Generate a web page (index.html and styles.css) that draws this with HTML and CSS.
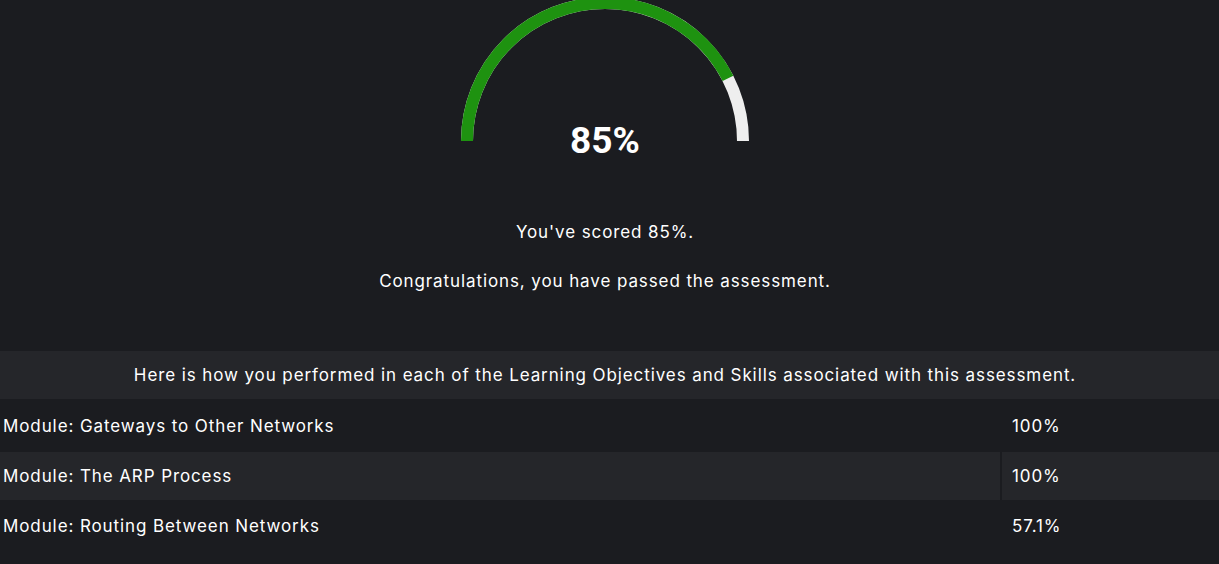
FILE: index.html
```html
<!DOCTYPE html>
<html>
<head>
<meta charset="utf-8">
<link rel="stylesheet" href="styles.css">
</head>
<body>
<div class="page">
  <div class="gauge">
    <svg class="gauge-svg" width="290" height="142" viewBox="0 0 290 142">
      <path d="M 7 141 A 138 138 0 0 1 283 141" fill="none" stroke="#eeeeee" stroke-width="12"/>
      <path d="M 7 141 A 138 138 0 0 1 283 141" fill="none" stroke="#1e9210" stroke-width="12" pathLength="100" stroke-dasharray="85 200"/>
      <text x="145" y="153" text-anchor="middle" class="gauge-label">85%</text>
    </svg>
  </div>
  <p class="msg msg-score">You've scored 85%.</p>
  <p class="msg msg-pass">Congratulations, you have passed the assessment.</p>
  <div class="results">
    <div class="results-head">Here is how you performed in each of the Learning Objectives and Skills associated with this assessment.</div>
    <div class="row row-1">
      <div class="cell cell-name">Module: Gateways to Other Networks</div>
      <div class="cell cell-score">100%</div>
    </div>
    <div class="row row-2 row-alt">
      <div class="cell cell-name">Module: The ARP Process</div>
      <div class="cell cell-score">100%</div>
    </div>
    <div class="row row-3">
      <div class="cell cell-name">Module: Routing Between Networks</div>
      <div class="cell cell-score">57.1%</div>
    </div>
  </div>
</div>
</body>
</html>
```
FILE: styles.css
```css
html, body {
  margin: 0;
  padding: 0;
  background: #1b1c20;
  height: 100%;
  overflow: hidden;
}
body {
  font-family: Inter, "Liberation Sans", sans-serif;
  font-weight: 400;
  color: #ffffff;
  letter-spacing: 0.9px;
}
.page {
  display: flex;
  flex-direction: column;
}
.gauge {
  display: flex;
  justify-content: center;
  height: 142px;
  padding-right: 9px;
}
.gauge-svg {
  display: block;
  overflow: visible;
}
.gauge-label {
  font-family: Roboto, "Liberation Sans", sans-serif;
  font-weight: 700;
  font-size: 37px;
  letter-spacing: 0;
  fill: #ffffff;
}
.msg {
  margin: 0;
  padding-right: 9px;
  text-align: center;
  font-size: 17px;
  line-height: 22px;
}
.msg-score {
  margin-top: 79px;
}
.msg-pass {
  margin-top: 27px;
}
.results {
  margin-top: 59px;
  display: flex;
  flex-direction: column;
}
.results-head {
  background: #25262a;
  height: 48px;
  padding-right: 9px;
  display: flex;
  align-items: center;
  justify-content: center;
  font-size: 17px;
}
.row {
  display: flex;
  font-size: 17px;
}
.row-1 { height: 53px; }
.row-2 { height: 48px; }
.row-3 { height: 51px; }
.row-alt { background: #25262a; }
.cell {
  display: flex;
  align-items: center;
}
.cell-name {
  width: 1000px;
  padding-left: 3px;
  box-sizing: border-box;
}
.cell-score {
  flex: 1;
  padding-left: 10px;
  border-left: 2px solid transparent;
}
.row-alt .cell-score {
  border-left-color: #1b1c20;
}
```
